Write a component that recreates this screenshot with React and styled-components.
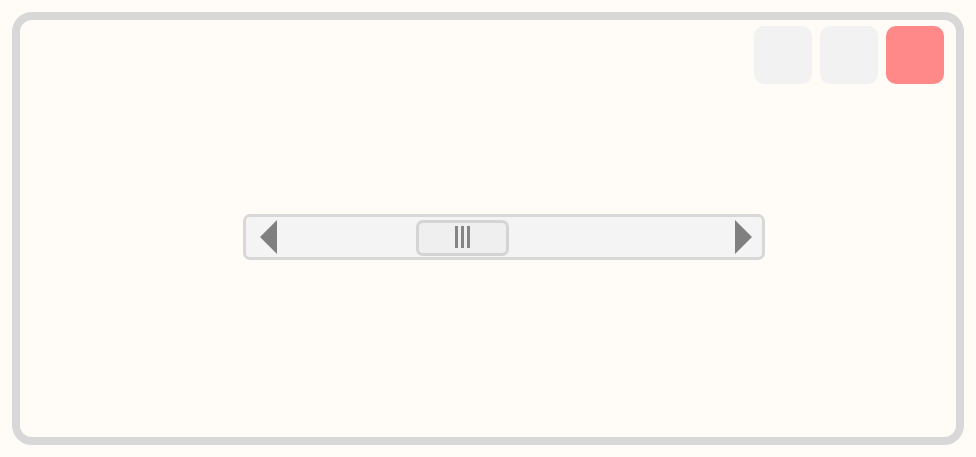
import React from "react";
import styled, { createGlobalStyle } from "styled-components";

const Global = createGlobalStyle`
    html, body {
        margin:0;
        padding:0;
        background:#fffcf8;
        font-family:"Liberation Sans", Arial, sans-serif;
    }
`;

const Frame = styled.div`
    box-sizing:border-box;
    margin:12px;
    width:952px;
    height:433px;
    border:8px solid #d8d8d8;
    border-radius:20px;
    background:#fffcf8;
    display:flex;
    flex-direction:column;
`;

const Toolbar = styled.div`
    display:flex;
    justify-content:flex-end;
    gap:8px;
    padding:6px 12px 0 0;
`;

const WinButton = styled.button`
    width:58px;
    height:58px;
    border:none;
    padding:0;
    border-radius:10px;
    background:${p => (p.$danger ? "#ff8888" : "#f2f2f2")};
    cursor:pointer;
`;

const Body = styled.div`
    flex:1;
    display:flex;
    align-items:center;
    justify-content:center;
    padding:0 0 47px 31px;
`;

const Scrollbar = styled.div`
    box-sizing:border-box;
    width:522px;
    height:46px;
    border:3px solid #d8d8d8;
    border-radius:7px;
    background:#f4f4f5;
    display:flex;
    align-items:center;
    padding:0 10px 0 14px;
`;

const Arrow = styled.div`
    width:0;
    height:0;
    border-top:17.5px solid transparent;
    border-bottom:17.5px solid transparent;
    ${p => (p.$dir === "left"
        ? "border-right:17px solid #808080;"
        : "border-left:17px solid #808080;")}
    cursor:pointer;
`;

const Track = styled.div`
    flex:1;
    height:100%;
    display:flex;
    align-items:center;
`;

const Thumb = styled.div`
    box-sizing:border-box;
    width:93px;
    height:36px;
    margin-top:2px;
    border:3px solid #d4d4d4;
    border-radius:7px;
    background:#efefef;
    display:flex;
    align-items:center;
    justify-content:center;
    gap:3px;
`;

const Grip = styled.span`
    width:3px;
    height:22px;
    margin-bottom:2px;
    background:#858585;
`;

const TRACK = 458;
const THUMB = 93;

const App = () => {
    const value = 0.381;
    return (
        <>
            <Global />
            <Frame>
                <Toolbar>
                    <WinButton aria-label="minimize" />
                    <WinButton aria-label="maximize" />
                    <WinButton $danger aria-label="close" />
                </Toolbar>
                <Body>
                    <Scrollbar>
                        <Arrow $dir="left" />
                        <Track>
                            <Thumb style={{ marginLeft: Math.round((TRACK - THUMB) * value) }}>
                                <Grip />
                                <Grip />
                                <Grip />
                            </Thumb>
                        </Track>
                        <Arrow $dir="right" />
                    </Scrollbar>
                </Body>
            </Frame>
        </>
    );
};

export default App;
